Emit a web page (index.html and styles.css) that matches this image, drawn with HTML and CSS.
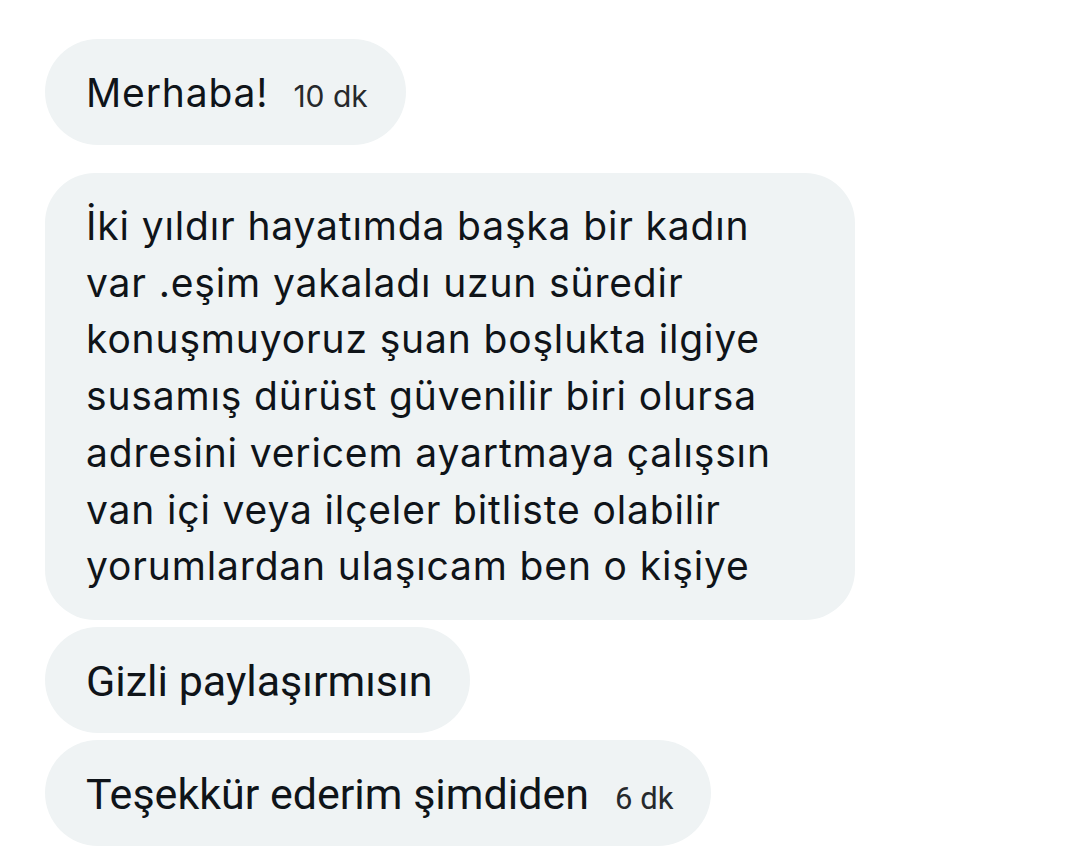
FILE: index.html
```html
<!DOCTYPE html>
<html lang="tr">
<head>
<meta charset="utf-8">
<link rel="stylesheet" href="styles.css">
</head>
<body>
<div class="chat">
  <div class="bubble pill first">
    <span class="msg">Merhaba!</span><span class="time">10 dk</span>
  </div>
  <div class="bubble big">
    <p class="msg">İki yıldır hayatımda başka bir kadın<br>var .eşim yakaladı uzun süredir<br>konuşmuyoruz şuan boşlukta ilgiye<br>susamış dürüst güvenilir biri olursa<br>adresini vericem ayartmaya çalışsın<br>van içi veya ilçeler bitliste olabilir<br>yorumlardan ulaşıcam ben o kişiye</p>
  </div>
  <div class="bubble pill">
    <span class="msg alt">Gizli paylaşırmısın</span>
  </div>
  <div class="bubble pill">
    <span class="msg alt">Teşekkür ederim şimdiden</span><span class="time alt-time">6 dk</span>
  </div>
</div>
</body>
</html>
```

FILE: styles.css
```css
html, body {
  margin: 0;
  padding: 0;
  background: #ffffff;
}
body {
  width: 1080px;
  height: 858px;
  overflow: hidden;
  font-family: Inter, "Noto Sans", sans-serif;
  color: #0f1419;
}
.chat {
  display: flex;
  flex-direction: column;
  align-items: flex-start;
  padding: 39px 0 0 45px;
  gap: 7px;
}
.bubble {
  background: #eff3f4;
  box-sizing: border-box;
}
.pill {
  height: 106px;
  border-radius: 53px;
  display: flex;
  align-items: baseline;
  padding: 2px 38px 0 41px;
  line-height: 104px;
}
.first {
  margin-bottom: 21px;
}
.big {
  border-radius: 50px;
  padding: 25px 41px 25px 41px;
  width: 810px;
}
.msg {
  font-size: 39px;
  letter-spacing: 0.85px;
  margin: 0;
}
.big .msg {
  line-height: 56.7px;
}
.time {
  font-size: 30px;
  color: #26292c;
  margin-left: 25px;
}
.alt {
  font-family: Roboto, sans-serif;
  font-size: 43px;
  letter-spacing: 0;
}
.alt-time {
  font-family: Roboto, sans-serif;
  font-size: 31px;
  margin-left: 26px;
}
```
